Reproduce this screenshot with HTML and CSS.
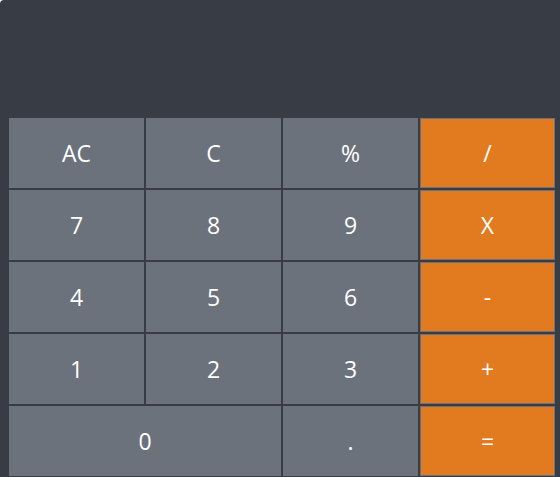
FILE: index.html
```html
<!DOCTYPE html>
<html>
<head>
<meta charset="utf-8">
<link rel="stylesheet" href="styles.css">
</head>
<body>
<div class="calc">
  <div class="display"></div>
  <div class="keys">
    <button class="key">AC</button>
    <button class="key">C</button>
    <button class="key">%</button>
    <button class="key op">/</button>
    <button class="key">7</button>
    <button class="key">8</button>
    <button class="key">9</button>
    <button class="key op">X</button>
    <button class="key">4</button>
    <button class="key">5</button>
    <button class="key">6</button>
    <button class="key op">-</button>
    <button class="key">1</button>
    <button class="key">2</button>
    <button class="key">3</button>
    <button class="key op">+</button>
    <button class="key wide">0</button>
    <button class="key">.</button>
    <button class="key op">=</button>
  </div>
</div>
</body>
</html>
```
FILE: styles.css
```css
html, body {
  margin: 0;
  padding: 0;
  background: #ffffff;
  overflow: hidden;
  height: 100%;
}
.calc {
  width: 564px;
  box-sizing: border-box;
  padding: 9px;
  background: #383c45;
  border-radius: 4px;
  display: flex;
  flex-direction: column;
  gap: 2px;
  min-height: 500px;
}
.display {
  height: 107px;
}
.keys {
  display: grid;
  grid-template-columns: repeat(4, 135px);
  grid-auto-rows: 70px;
  gap: 2px;
}
.key {
  margin: 0;
  border: 1px solid #6c727c;
  background: #6c727c;
  color: #ffffff;
  font-family: "Open Sans", sans-serif;
  font-size: 23px;
  padding: 0;
  display: flex;
  align-items: center;
  justify-content: center;
}
.op {
  background: #e27a20;
}
.wide {
  grid-column: span 2;
}
```
